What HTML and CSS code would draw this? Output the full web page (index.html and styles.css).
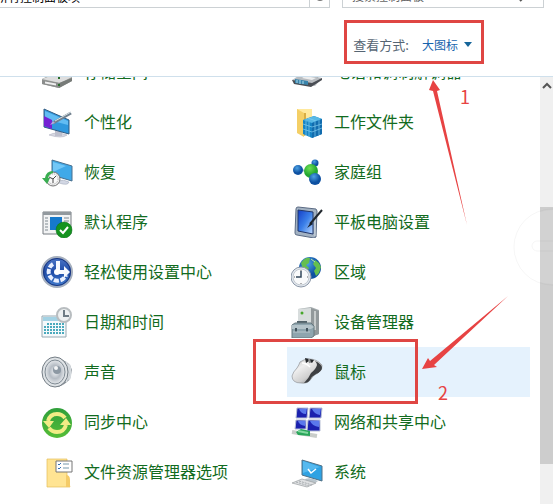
FILE: index.html
```html
<!DOCTYPE html>
<html lang="zh-CN">
<head>
<meta charset="utf-8">
<title>所有控制面板项</title>
<link rel="stylesheet" href="styles.css">
</head>
<body>
<div class="window">
  <div class="address-row">
    <div class="address">所有控制面板项</div>
    <button class="refresh" type="button" aria-label="刷新"><svg width="10" height="10" viewBox="0 0 10 10"><circle cx="5" cy="5" r="4" fill="none" stroke="#777" stroke-width="2"/></svg></button>
    <div class="search">
      <input type="search" aria-label="搜索控制面板" placeholder="搜索控制面板">
      <svg width="12" height="12" viewBox="0 0 12 12"><path d="M1 11 6 6" stroke="#555" stroke-width="2"/><circle cx="8" cy="4" r="3" fill="none" stroke="#555"/></svg>
    </div>
  </div>
  <header class="toolbar">
    <span class="view-label" id="view-label">查看方式:</span>
    <button class="view-button" type="button" aria-describedby="view-label">大图标 <svg width="8" height="5" viewBox="0 0 8 5"><path d="M0 0h8L4 5z" fill="#16659a"/></svg></button>
  </header>
  <div class="content">
    <main class="items">
      <a class="item" href="#"><svg viewBox="0 0 32 32"><path d="M5 14 17 9l13 4v7l-12 6-13-5z" fill="#777"/><path d="M1 23 13 17l18 4v4L18 32 1 28z" fill="#999c9a"/><path d="M1 23 15 18l16 3-12 6z" fill="#dedede"/><path d="M1 24l17 3v5L1 28z" fill="#8b8d8c"/><path d="M4 25.500l11 2v2l-11-2z" fill="#eee"/><path d="M18 27 31 22v3l-13 7z" fill="#777b78"/><path d="M18 20v3M18 28v2" stroke="#286d2a" stroke-width="2"/></svg><span>存储空间</span></a>
      <a class="item" href="#"><svg viewBox="0 0 32 32"><path d="M4 14 18 9l12 5-4 10-22-3z" fill="#555f68"/><path d="M1 24 11 18l20 4-7 8-20-3z" fill="#b9bdc1"/><path d="M1 24l20 3 10-5v2L20 31 3 28z" fill="#4a4e54"/><path d="M4 23l13 2v4L4 27z" fill="#3984ac"/><path d="M6 24v3M9 24v4M12 25v3" stroke="#aedbea"/><path d="M14 20l11 2-4 2-10-2z" fill="#eee"/></svg><span>电话和调制解调器</span></a>

      <a class="item" href="#"><svg viewBox="0 0 32 32"><path d="M8 29q7-4 18 0-5 4-18 0z" fill="#d7d8e2" stroke="#a5a7b8" stroke-width=".5"/><path d="M14 24l7 2v4h-7z" fill="#bdbfcd"/><path d="M3 3l25 11v14L3 21z" fill="#2f98de" stroke="#315b82"/><path d="M4 5l23 10v4L4 13z" fill="#62bcf3"/><path d="M3 10l8 4v9l-8-3z" fill="#7422d4"/><path d="M12 17 30 7" stroke="#71818e" stroke-width="3"/><path d="M14 15 30 6" stroke="#d7e0e3"/><path d="M9 19l3-4 2 2z" fill="#b6a9dd"/></svg><span>个性化</span></a>
      <a class="item" href="#"><svg viewBox="0 0 32 32"><path d="M6 3h15v26l-15-2z" fill="#ffe99d"/><path d="M6 3l7 4v24l-7-4z" fill="#f4cf66"/><path d="M13 7h2v22l-2 1z" fill="#d8ad42"/><path d="M12 14l11-4 8 3v15l-10 4-9-4z" fill="#1684c5"/><path d="M12 14l11-4 8 3-10 4z" fill="#58b8e5"/><path d="M21 17l10-4v15l-10 4z" fill="#126cae"/><path d="M12 18l9 3 10-3M12 23l9 3 10-4M15 15v15M18 16v15M24 16v15M28 14v15M17 12l8 3" fill="none" stroke="#83cff1" stroke-width=".7"/></svg><span>工作文件夹</span></a>

      <a class="item" href="#"><svg viewBox="0 0 32 32"><path d="M17 25q6-2 11 1-1 4-10 1z" fill="#d2d7e4" stroke="#9ba3b5" stroke-width=".5"/><path d="M11 4l20 6v15L11 19z" fill="#40a9e8" stroke="#496f8e"/><path d="M12 6l13 4-13 6z" fill="#72c7f7"/><circle cx="12" cy="23" r="7" fill="#ececec" stroke="#777"/><circle cx="12" cy="23" r="5" fill="#fafafa" stroke="#aaa" stroke-dasharray="1 1"/><path d="M8 21l4 2 3-3M12 23v4" fill="none" stroke="#444"/><path d="M12 15Q5 15 4 22H1l5 6 3-6H7q1-4 5-5z" fill="#39ad50"/></svg><span>恢复</span></a>
      <a class="item" href="#"><svg viewBox="0 0 32 32"><defs><radialGradient id="ball" cx=".4" cy=".3"><stop stop-color="#4da2e4"/><stop offset="1" stop-color="#0d50a1"/></radialGradient><radialGradient id="green" cx=".4" cy=".3"><stop stop-color="#6edf54"/><stop offset="1" stop-color="#23a631"/></radialGradient></defs><path d="M7 14l13 1 4-8M20 15l4 8" stroke="#9fbac8" stroke-width="2" fill="none"/><circle cx="24" cy="7" r="3.500" fill="url(#ball)"/><circle cx="20" cy="15" r="7" fill="url(#green)"/><circle cx="7" cy="14" r="5" fill="url(#ball)"/><circle cx="24" cy="23" r="6" fill="url(#ball)"/></svg><span>家庭组</span></a>

      <a class="item" href="#"><svg viewBox="0 0 32 32"><path d="M2 6h28v22H2z" fill="#f2f3f4" stroke="#777d82"/><path d="M2 6h28v3H2z" fill="#92999e"/><path d="M9 11h12v13H9z" fill="#1679cb"/><path d="M4 12h3M4 15h3M4 18h3M4 21h3M4 24h3M23 12h5M23 15h5" stroke="#7e8990"/><circle cx="23" cy="24" r="8" fill="#159320" stroke="#087116" stroke-width=".5"/><path d="M19 24l3 3 5-6" fill="none" stroke="#fff" stroke-width="2"/></svg><span>默认程序</span></a>
      <a class="item" href="#"><svg viewBox="0 0 32 32"><defs><linearGradient id="screen" x1="0" y1="0" x2="1" y2="1"><stop stop-color="#143ec6"/><stop offset=".5" stop-color="#3b80e9"/><stop offset="1" stop-color="#bfdaff"/></linearGradient></defs><path d="M5 3q0-2 2-2l18 2 1 2-1 26-2 1-17-3q-2 0-2-2z" fill="#a3b2c2" stroke="#5b6b84"/><path d="M7 4l15 2v22L7 25z" fill="url(#screen)" stroke="#21366b"/><path d="M24 12v18" stroke="#d8e0e6"/><path d="M31 4 19 18" stroke="#20272d" stroke-width="2"/><path d="M20 16l2 2-6 4z" fill="#16202b"/></svg><span>平板电脑设置</span></a>

      <a class="item" href="#"><svg viewBox="0 0 32 32"><defs><linearGradient id="ease" x2="0" y2="1"><stop stop-color="#4f79c9"/><stop offset=".5" stop-color="#1e4ba7"/><stop offset="1" stop-color="#4681d1"/></linearGradient></defs><circle cx="16" cy="16" r="15" fill="url(#ease)" stroke="#a6afbd" stroke-width="2"/><circle cx="16" cy="16" r="13.500" fill="none" stroke="#1b347b"/><path d="M12 8A9 9 0 1 0 25 19" fill="none" stroke="#e8efff" stroke-width="4" stroke-dasharray="5 1.500"/><path d="M15 5h4v10h-4zM17 14h6v-4l6 6-6 6v-4h-6z" fill="#f6f9ff"/><circle cx="16" cy="16" r="3" fill="#fff"/></svg><span>轻松使用设置中心</span></a>
      <a class="item" href="#"><svg viewBox="0 0 32 32"><circle cx="19" cy="12" r="11" fill="url(#ball)"/><path d="M10 7q4-6 9-5l-1 5-3 2 3 3-2 4-4-3zM24 4l4 3 2 4-2 6-3 3-2-5 2-3-3-4z" fill="#65bf4e"/><path d="M20 3l4 3" stroke="#b9e9a6"/><circle cx="10" cy="21" r="10" fill="#e3e8ee" stroke="#8c98a8"/><circle cx="10" cy="21" r="8" fill="#f9fafb" stroke="#c2c9d1"/><path d="M10 15v6h-5" fill="none" stroke="#33485c" stroke-width="1.500"/><path d="M10 14v1M10 27v1M3 21h1M16 21h1" stroke="#666"/></svg><span>区域</span></a>

      <a class="item" href="#"><svg viewBox="0 0 32 32"><path d="M1 10h24v21H1z" fill="#f5f9fb" stroke="#96a9b2"/><path d="M2 11h22v4H2z" fill="#a3d2e4"/><path d="M6 18h17M3 21h20M3 24h20M3 27h20" stroke="#4aaabd" stroke-width="2" stroke-dasharray="2 1"/><circle cx="23" cy="9" r="7" fill="#edf0f1" stroke="#b8bdc0" stroke-width="2"/><path d="M23 4v6h5" fill="none" stroke="#6e7b84" stroke-width="2"/></svg><span>日期和时间</span></a>
      <a class="item" href="#"><svg viewBox="0 0 32 32"><path d="M7 3l13-2 8 3v24l-9 3-12-3z" fill="#a8afb2"/><path d="M7 3l13-1v28L7 28z" fill="#d8dddd"/><path d="M20 2l8 3v23l-8 3z" fill="#92999b"/><path d="M24 5v19" stroke="#c7cccc" stroke-width="2"/><circle cx="11" cy="7" r="1.500" fill="#46a72a"/><path d="M7 19v-3h8v3" fill="none" stroke="#53636a" stroke-width="2"/><path d="M1 19l3-2h16l3 3v10l-3 2H1z" fill="#8fa5ae" stroke="#66787f"/><path d="M1 19h19l3 2-3 2H1z" fill="#b5c4ca"/><path d="M5 22v4M16 22v4" stroke="#43545e" stroke-width="2"/><path d="M2 26h17" stroke="#b9c7cc"/></svg><span>设备管理器</span></a>

      <a class="item" href="#"><svg viewBox="0 0 32 32"><defs><radialGradient id="speaker"><stop stop-color="#eff2f5"/><stop offset=".55" stop-color="#b5bcc4"/><stop offset="1" stop-color="#e5e8eb"/></radialGradient></defs><path d="M17 2q8 3 12 7l2 5-2 9q-4 5-12 8z" fill="#878f96"/><path d="M25 6q5 9 0 20M28 8q3 8 0 16" fill="none" stroke="#d5dade" stroke-width="2"/><ellipse cx="14" cy="16" rx="13" ry="15" fill="#dfe3e6" stroke="#747d85"/><ellipse cx="14" cy="16" rx="10" ry="12" fill="url(#speaker)" stroke="#7e8992"/><circle cx="16" cy="14" r="4" fill="#8c98a3"/><ellipse cx="15" cy="12" rx="2" ry="2" fill="#f4f5f6"/></svg><span>声音</span></a>
      <a class="item selected" href="#"><svg viewBox="0 0 32 32"><defs><linearGradient id="mouse" x2=".8" y2="1"><stop stop-color="#bbb"/><stop offset=".35" stop-color="#efefef"/><stop offset=".7" stop-color="#cfcfcf"/><stop offset="1" stop-color="#77797b"/></linearGradient></defs><path d="M9 6q4-3 9-3 8 0 13 6 1 5-4 8-5 2-7 6-3 5-10 4Q1 27 1 20q1-4 5-8 2-3 3-6z" fill="url(#mouse)" stroke="#84878a" stroke-width=".6"/><path d="M24 5q7 3 7 7-1 4-6 6-4 2-6 6-2 3-6 3 5-5 7-10 5-4 6-8 0-2-2-4z" fill="#3d4043"/><path d="M14 2l9 2-2 3-3-2-3 2z" fill="#25282b"/><path d="M18 3l1 4" stroke="#8e9193" stroke-width="2"/><path d="M11 7q4 0 8 4" fill="none" stroke="#fff" stroke-width="1.500"/></svg><span>鼠标</span></a>

      <a class="item" href="#"><svg viewBox="0 0 32 32"><defs><linearGradient id="sync" x2="0" y2="1"><stop stop-color="#2f9f3b"/><stop offset="1" stop-color="#55bd37"/></linearGradient></defs><circle cx="16" cy="17" r="15" fill="url(#sync)"/><path d="M7 15Q9 8 16 8q5 0 8 4M25 19q-2 7-9 7-5 0-8-4" fill="none" stroke="#f2ec86" stroke-width="4"/><path d="M2 15h11l-5 7zM19 19l6-7 5 7z" fill="#f2ec86"/></svg><span>同步中心</span></a>
      <a class="item" href="#"><svg viewBox="0 0 32 32"><path d="M6 2h11l-1 10H5zM19 2h12l-1 10H18zM5 14h10v9H4zM17 14h12v11H16z" fill="#1b21ae"/><path d="M8 3q2 5 7 5l1-6zM21 3q2 5 8 6l1-7zM7 15q1 4 7 5l1-6zM19 15q2 5 9 6l1-7z" fill="#5a78ec"/><path d="M6 2h11l-1 10H5zM19 2h12l-1 10H18zM5 14h10v9H4zM17 14h12v11H16z" fill="none" stroke="#b7bfd6"/><path d="M1 26l25 4" stroke="#c9cdca" stroke-width="4"/><path d="M5 26l5-3 9 2v5l-12-1z" fill="#29a65a"/><path d="M7 25l10 2" stroke="#82d9a0" stroke-width="2"/></svg><span>网络和共享中心</span></a>

      <a class="item" href="#"><svg viewBox="0 0 32 32"><path d="M6 3h20v24q3 1 3 4H6z" fill="#ffe493" stroke="#e4bd59" stroke-width=".7"/><path d="M25 31V19q4 0 4 5v7z" fill="#f4cb68"/><path d="M15 5h16v11H15z" fill="#fff" stroke="#777"/><path d="M17 8l1 1 2-2M17 12l1 1 2-2" fill="none" stroke="#3270b5"/><path d="M22 8h6M22 12h6" stroke="#7599ad"/></svg><span>文件资源管理器选项</span></a>
      <a class="item" href="#"><svg viewBox="0 0 32 32"><path d="M14 23q6-2 13 2-3 4-12 0z" fill="#bac5cc"/><path d="M11 4l20 6v15l-20-6z" fill="#2fa2e3" stroke="#507086"/><path d="M12 5l17 6-17 6z" fill="#55b9ef"/><path d="M17 13l3 4 5-4" fill="none" stroke="#fff" stroke-width="1.500"/><path d="M1 27l10-4 14 4-9 4z" fill="#dfe1e3" stroke="#9b9fa2" stroke-width=".7"/><path d="M5 26l13 4M8 25l13 4" stroke="#a7acaf" stroke-dasharray="2 1"/></svg><span>系统</span></a>
    </main>
    <div class="scrollbar" aria-hidden="true">
      <svg width="10" height="8" viewBox="0 0 10 8"><path d="M1 6l4-4 4 4" fill="none" stroke="#555" stroke-width="2"/></svg>
      <div class="thumb"></div>
    </div>
  </div>
  <svg class="notes" width="553" height="504" viewBox="0 0 553 504" aria-hidden="true">
    <g fill="none" stroke="#888" stroke-opacity=".08"><circle cx="552" cy="247" r="38"/><rect x="532" y="241" width="40" height="10" rx="5"/></g>
    <circle cx="552" cy="247" r="37" fill="#fff" fill-opacity=".1"/>
    <g fill="none" stroke="#df4643"><rect x="345.500" y="21.500" width="137" height="41" stroke-width="3"/><rect x="254.500" y="340.500" width="162" height="62" stroke-width="3"/></g>
    <g fill="#e74343"><path d="M433 80l7 10-3 1 30 134-34-134-4-1z"/><path d="M422 369l6-11 2 3 78-65-74 69 3 2z"/><text x="460" y="104">1</text><text x="438" y="400">2</text></g>
  </svg>
</div>
</body>
</html>
```
FILE: styles.css
```css
* { box-sizing: border-box; }
body {
  margin: 0;
  background: #fff;
  font-family: "Noto Sans CJK SC", sans-serif;
}
button, input { font: inherit; }
.window {
  position: relative;
  display: flex;
  flex-direction: column;
  height: 100vh;
  overflow: hidden;
}
.address-row {
  display: flex;
  flex: none;
  align-items: flex-end;
  height: 8px;
  padding-right: 9px;
  overflow: hidden;
  font-size: 12px;
  line-height: 20px;
}
.address {
  display: flex;
  flex: 1;
  align-items: flex-end;
  height: 24px;
  border-bottom: 1px solid #ccd1d4;
  color: #000;
  text-indent: -4px;
}
.refresh {
  display: flex;
  align-items: center;
  justify-content: center;
  width: 21px;
  height: 24px;
  margin-right: 12px;
  padding: 0;
  border: 1px solid #ccd1d4;
  background: #fff;
}
.search {
  display: flex;
  align-items: center;
  width: 202px;
  height: 24px;
  padding: 0 12px 0 9px;
  border: 1px solid #ccd1d4;
}
.search input {
  flex: 1;
  min-width: 0;
  padding: 0;
  border: 0;
  background: none;
}
.search input::placeholder { color: #666; }
.toolbar {
  display: flex;
  flex: none;
  align-items: center;
  justify-content: flex-end;
  gap: 13px;
  height: 69px;
  padding: 4px 81px 0 0;
  border-bottom: 1px solid #cfe0ec;
  font-size: 13px;
}
.view-label { color: #566573; }
.view-button {
  display: flex;
  align-items: center;
  gap: 6px;
  padding: 0;
  border: 0;
  background: none;
  color: #1763ad;
  font-size: 12px;
}
.content {
  display: flex;
  flex: 1;
  min-height: 0;
  overflow: hidden;
}
.items {
  display: grid;
  flex: 1;
  grid-template-columns: 1fr 1fr;
  grid-auto-rows: 50px;
  column-gap: 7px;
  margin-top: -30px;
  padding: 0 10px 0 37px;
}
.item {
  display: flex;
  align-items: center;
  gap: 11px;
  padding-left: 4px;
  color: #126b20;
  font-size: 16px;
  line-height: 24px;
  text-decoration: none;
  white-space: nowrap;
}
.item span { padding-bottom: 2px; }
.item svg {
  flex: none;
  width: 32px;
  height: 32px;
}
.selected { background: #e5f2fd; }
.scrollbar {
  display: flex;
  flex-direction: column;
  align-items: center;
  width: 13px;
  padding-top: 5px;
  background: #f0f0f0;
}
.thumb {
  width: 100%;
  height: 61%;
  margin-top: 117px;
  background: #cdcdcd;
}
.notes {
  position: absolute;
  top: 0;
  left: 0;
  pointer-events: none;
}
.notes text { font-size: 18px; }
```
